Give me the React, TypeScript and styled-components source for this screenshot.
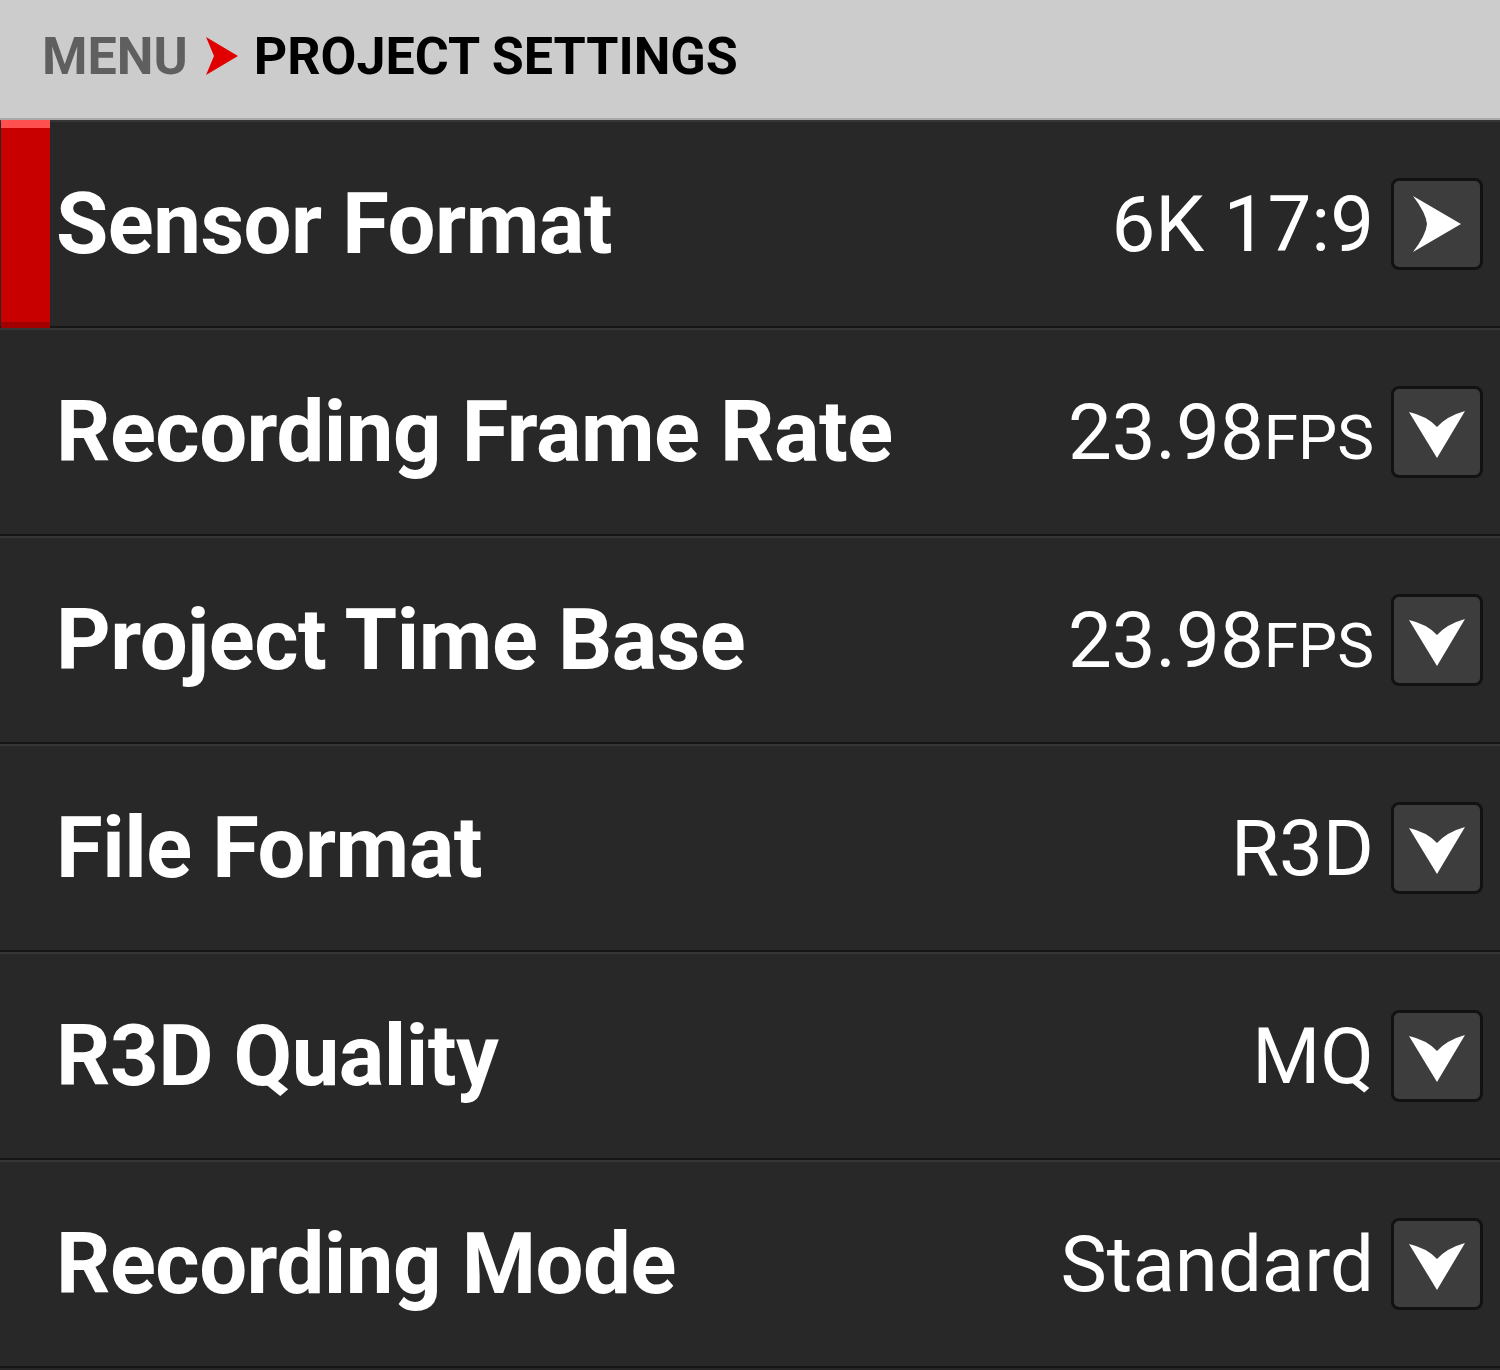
import React from "react";
import styled, { createGlobalStyle } from "styled-components";

const Global = createGlobalStyle`
  html, body { margin: 0; padding: 0; background: #262626; }
  body { font-family: Roboto, "Liberation Sans", sans-serif; }
`;

const Page = styled.div`
  width: 1500px;
  height: 1370px;
  display: flex;
  flex-direction: column;
  background: #262626;
  overflow: hidden;
`;

const Header = styled.header`
  height: 120px;
  box-sizing: border-box;
  background: #cccccc;
  border-bottom: 2px solid #a8a8a8;
  display: flex;
  align-items: center;
  padding-left: 42px;
  padding-bottom: 6px;
  gap: 16px;
`;

const Crumb = styled.span<{ $active?: boolean }>`
  font-family: Roboto, "Liberation Sans", sans-serif;
  font-weight: 700;
  font-size: 52px;
  color: ${(p) => (p.$active ? "#000000" : "#5f5f5f")};
`;

const List = styled.div`
  display: flex;
  flex-direction: column;
`;

const Row = styled.div`
  height: 208px;
  box-sizing: border-box;
  display: grid;
  grid-template-columns: 50px 1fr auto 92px;
  align-items: center;
  background: #282828;
  border-top: 2px solid #353535;
  border-bottom: 2px solid #161616;
  padding-right: 17px;
`;

const Marker = styled.div<{ $on?: boolean }>`
  align-self: stretch;
  margin: -2px 0 -2px 1px;
  background: ${(p) => (p.$on ? "#c80000" : "transparent")};
  border-top: ${(p) => (p.$on ? "8px solid #ff5050" : "none")};
  border-bottom: ${(p) => (p.$on ? "6px solid #a20000" : "none")};
`;

const Label = styled.div`
  padding-left: 6px;
  font-family: Roboto, "Liberation Sans", sans-serif;
  font-weight: 700;
  font-size: 85px;
  color: #ffffff;
  white-space: nowrap;
  letter-spacing: -0.5px;
`;

const Value = styled.div`
  font-family: Roboto, "Liberation Sans", sans-serif;
  font-weight: 400;
  font-size: 78px;
  color: #ffffff;
  white-space: nowrap;
  padding-right: 17px;
`;

const Unit = styled.span`
  font-size: 62px;
`;

const Btn = styled.div`
  width: 92px;
  height: 92px;
  box-sizing: border-box;
  background: #3d3d3d;
  border: 3px solid #121212;
  border-radius: 8px;
  display: flex;
  align-items: center;
  justify-content: center;
`;

const RightArrow = () => (
  <svg width="54" height="58" viewBox="0 0 54 58">
    <path d="M3 1 L51 29 L3 57 Q16 40 17 29 Q16 18 3 1 Z" fill="#fff" />
  </svg>
);

const DownArrow = () => (
  <svg width="60" height="60" viewBox="0 0 60 60">
    <path d="M2 10 Q20 14 30 25 Q40 14 58 9 L30 56 Z" fill="#fff" />
  </svg>
);

const MenuArrow = () => (
  <svg width="34" height="38" viewBox="0 0 34 38">
    <path d="M2 0 L34 19 L2 38 L10 19 Z" fill="#e00000" />
  </svg>
);

type Item = { label: string; value: string; unit?: string; kind: "right" | "down" };

const items: Item[] = [
  { label: "Sensor Format", value: "6K 17:9", kind: "right" },
  { label: "Recording Frame Rate", value: "23.98", unit: "FPS", kind: "down" },
  { label: "Project Time Base", value: "23.98", unit: "FPS", kind: "down" },
  { label: "File Format", value: "R3D", kind: "down" },
  { label: "R3D Quality", value: "MQ", kind: "down" },
  { label: "Recording Mode", value: "Standard", kind: "down" },
];

export default function App() {
  return (
    <Page>
      <Global />
      <Header>
        <Crumb>MENU</Crumb>
        <MenuArrow />
        <Crumb $active>PROJECT SETTINGS</Crumb>
      </Header>
      <List>
        {items.map((it, i) => (
          <Row key={it.label}>
            <Marker $on={i === 0} />
            <Label>{it.label}</Label>
            <Value>
              {it.value}
              {it.unit && <Unit>{it.unit}</Unit>}
            </Value>
            <Btn>{it.kind === "right" ? <RightArrow /> : <DownArrow />}</Btn>
          </Row>
        ))}
      </List>
    </Page>
  );
}
